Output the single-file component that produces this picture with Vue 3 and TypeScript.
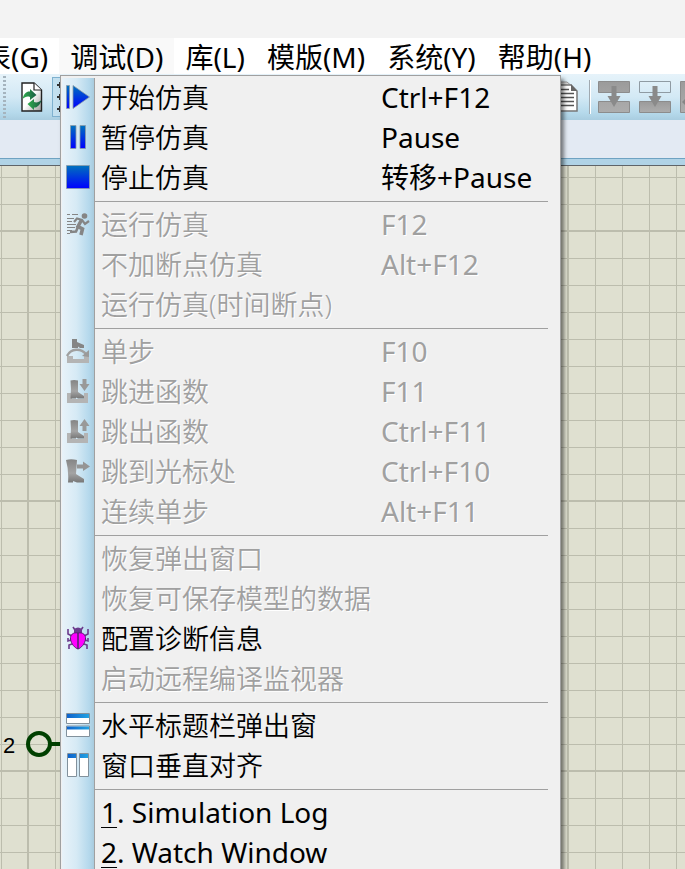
<script setup lang="ts">
type IconName =
  | 'play' | 'pause' | 'stop' | 'run' | 'over' | 'into' | 'out' | 'cursor'
  | 'bug' | 'horizontal' | 'vertical'

interface MenuItem {
  label: string
  index?: string
  shortcut?: string
  icon?: IconName
  disabled?: boolean
}

const menus = [
  { label: '图表(G)' },
  { label: '调试(D)', open: true },
  { label: '库(L)' },
  { label: '模版(M)' },
  { label: '系统(Y)' },
  { label: '帮助(H)' },
]

const groups: MenuItem[][] = [
  [
    { label: '开始仿真', shortcut: 'Ctrl+F12', icon: 'play' },
    { label: '暂停仿真', shortcut: 'Pause', icon: 'pause' },
    { label: '停止仿真', shortcut: '转移+Pause', icon: 'stop' },
  ],
  [
    { label: '运行仿真', shortcut: 'F12', icon: 'run', disabled: true },
    { label: '不加断点仿真', shortcut: 'Alt+F12', disabled: true },
    { label: '运行仿真(时间断点)', disabled: true },
  ],
  [
    { label: '单步', shortcut: 'F10', icon: 'over', disabled: true },
    { label: '跳进函数', shortcut: 'F11', icon: 'into', disabled: true },
    { label: '跳出函数', shortcut: 'Ctrl+F11', icon: 'out', disabled: true },
    { label: '跳到光标处', shortcut: 'Ctrl+F10', icon: 'cursor', disabled: true },
    { label: '连续单步', shortcut: 'Alt+F11', disabled: true },
  ],
  [
    { label: '恢复弹出窗口', disabled: true },
    { label: '恢复可保存模型的数据', disabled: true },
    { label: '配置诊断信息', icon: 'bug' },
    { label: '启动远程编译监视器', disabled: true },
  ],
  [
    { label: '水平标题栏弹出窗', icon: 'horizontal' },
    { label: '窗口垂直对齐', icon: 'vertical' },
  ],
  [
    { index: '1', label: 'Simulation Log' },
    { index: '2', label: 'Watch Window' },
  ],
]
</script>

<template>
  <div class="app">
    <svg class="defs" width="0" height="0" aria-hidden="true">
      <defs>
        <linearGradient id="blue" x1="0" y1="0" x2="0" y2="1">
          <stop offset="0" stop-color="#0072bc" />
          <stop offset="1" stop-color="#0000ff" />
        </linearGradient>
        <linearGradient id="bar" x1="0" y1="0" x2="1" y2="0">
          <stop offset="0" stop-color="#0d62cc" />
          <stop offset="1" stop-color="#22a2e2" />
        </linearGradient>
        <linearGradient id="grey" x1="0" y1="0" x2="0" y2="1">
          <stop offset="0" stop-color="#9b9b9b" />
          <stop offset="1" stop-color="#adadad" />
        </linearGradient>
        <linearGradient id="boot" x1="0" y1="0" x2="0" y2="1">
          <stop offset="0" stop-color="#858585" />
          <stop offset="0.6" stop-color="#a4a4a4" />
          <stop offset="1" stop-color="#777" />
        </linearGradient>
        <linearGradient id="paper" x1="0" y1="0" x2="1" y2="1">
          <stop offset="0.5" stop-color="#fff" />
          <stop offset="1" stop-color="#999" />
        </linearGradient>
        <linearGradient id="leaf" x1="0" y1="0" x2="1" y2="0">
          <stop offset="0" stop-color="#2fae4e" />
          <stop offset="1" stop-color="#1a5c44" />
        </linearGradient>
      </defs>
    </svg>

    <div class="titlebar"></div>

    <nav class="menubar">
      <button v-for="m in menus" :key="m.label" type="button" class="menu-title" :class="{ open: m.open }">{{ m.label }}</button>
    </nav>

    <div class="toolbar">
      <div class="tools">
        <span class="grip"></span>
        <button type="button" class="tool refresh" aria-label="刷新">
          <svg width="22" height="30" viewBox="0 0 22 30">
            <path d="M1 1H13L20.500 8V29H1Z" fill="url(#paper)" stroke="#222" stroke-width="1.4" />
            <path d="M13 1V8H20.500" fill="#fff" stroke="#222" stroke-width="1.2" />
            <path d="M1.500 17C3 11 6 9 9 9.500V7L15.500 13L9 18V15C6 14 4 15 1.500 17Z" fill="url(#leaf)" />
            <path d="M20.500 18C19 24 15 26 13 25.500V28L6.500 22L13 17V20C16 21 18 20 20.500 18Z" fill="url(#leaf)" />
          </svg>
        </button>
        <button type="button" class="tool grid-toggle" aria-label="网格">
          <svg width="28" height="32" viewBox="0 0 28 32">
            <path d="M7 1v6M7 13v6M7 25v6M4 4h6M4 16h6M4 28h6" stroke="#333" stroke-width="2" />
          </svg>
        </button>
      </div>
      <div class="tools">
        <button type="button" class="tool" aria-label="复制">
          <svg width="32" height="32" viewBox="0 0 32 32">
            <path d="M4 1H21L27 6V29H4Z" fill="#d5d5d5" stroke="#999" />
            <path d="M8 4H25L31 10V30H8Z" fill="#fff" stroke="#777" stroke-width="1.5" />
            <path d="M25 3L31 10H25Z" fill="#666" />
            <path d="M10 8.500H23M10 12.500H28M10 16.500H28M10 20.500H28M10 24.500H28" stroke="#555" stroke-width="1.5" />
          </svg>
        </button>
        <span class="divider"></span>
        <button type="button" class="tool block" aria-label="块复制">
          <svg width="32" height="32" viewBox="0 0 32 32">
            <path d="M.5.5H31.5V11.5H.5ZM.5 20.5H31.5V31.5H.5Z" fill="url(#grey)" stroke="#8c8c8c" />
            <path d="M13.500 5H18.500V15H22.500L16 26L9.500 15H13.500Z" fill="#8a8a8a" />
          </svg>
        </button>
        <button type="button" class="tool block" aria-label="块移动">
          <svg width="32" height="32" viewBox="0 0 32 32">
            <path d="M.5.5H31.5V11.5H.5Z" fill="none" stroke="#8f9ba3" />
            <path d="M.5 20.5H31.5V31.5H.5Z" fill="url(#grey)" stroke="#8c8c8c" />
            <path d="M13.500 5H18.500V15H22.500L16 26L9.500 15H13.500Z" fill="#8a8a8a" />
          </svg>
        </button>
        <button type="button" class="tool block" aria-label="块旋转">
          <svg width="32" height="32" viewBox="0 0 32 32">
            <path d="M.5.5H31.5V31.5H.5Z" fill="url(#grey)" stroke="#8c8c8c" />
            <path d="M2 21L8 15V27Z" fill="#858585" />
          </svg>
        </button>
      </div>
    </div>
    <div class="band"></div>
    <div class="edge"></div>

    <main class="canvas">
      <span class="pin-label">2</span>
      <svg class="pin" width="40" height="30" viewBox="0 0 40 30">
        <circle cx="13" cy="15" r="11" fill="none" stroke="#004000" stroke-width="4" />
        <path d="M24 15H40" stroke="#004000" stroke-width="4" />
      </svg>
    </main>

    <div class="menu" role="menu">
      <div v-for="(group, g) in groups" :key="g" class="group" role="group">
        <button v-for="item in group" :key="item.label" type="button" role="menuitem" class="item" :disabled="item.disabled">
          <span class="icon">
            <svg v-if="item.icon" width="24" height="24" viewBox="0 0 24 24">
              <g v-if="item.icon === 'play'" fill="url(#blue)" stroke="#8a9aa8" stroke-width=".8">
                <path d="M.5.5H3.500V23.500H.5ZM7 .5L23.500 12L7 23.500Z" />
              </g>
              <path v-else-if="item.icon === 'pause'" d="M4.500.5H10V23.500H4.500ZM14 .5H19.500V23.500H14Z" fill="url(#blue)" stroke="#8a9aa8" stroke-width=".8" />
              <path v-else-if="item.icon === 'stop'" d="M.5.5H23.500V23.500H.5Z" fill="url(#blue)" stroke="#8a9aa8" stroke-width=".8" />
              <g v-else-if="item.icon === 'run'" fill="none" stroke="#858585">
                <path d="M1 2.500H4M6 2.500H12M1 6.500H8M1 9.500H6M1 12.500H10M1 15.500H9M1 18.500H6M1 21.500H4" stroke-width="1.200" />
                <circle cx="18.500" cy="4" r="2.800" fill="#858585" stroke="none" />
                <path d="M8 10L11 6.500L16 8L19 12L23 9" stroke-width="2.200" />
                <path d="M15.500 8L12 14.500L16.500 17L15 23" stroke-width="3.600" />
                <path d="M12 15L10 19.500L4 20" stroke-width="2.600" />
              </g>
              <g v-else-if="item.icon === 'over'">
                <path d="M6 0H11V3L18 6V9H14L12 7.500V9H6Z" fill="#858585" />
                <path d="M1 17H7V20H18V17H23V24H1Z" fill="#b4b4b4" />
                <path d="M1 17C5 9 15 9 20 15" fill="none" stroke="#a0a0a0" stroke-width="2.400" />
                <path d="M23 11V18L16 17Z" fill="#9a9a9a" />
              </g>
              <g v-else-if="item.icon === 'into' || item.icon === 'out'">
                <path d="M1 14H6V20H18V14H22V24H1Z" fill="#b4b4b4" />
                <path d="M4.500 1.500Q8 .5 12 1.500V13L18 17V19.500H12L10 18.500V19.500H4.500Q5.500 10 4.500 1.500Z" fill="url(#boot)" />
                <path v-if="item.icon === 'into'" d="M16.500 0H20.500V5H23.500L18.500 12L13.500 5H16.500Z" fill="#999" />
                <path v-else d="M16.500 12H20.500V7H23.500L18.500 0L13.500 7H16.500Z" fill="#999" />
              </g>
              <g v-else-if="item.icon === 'cursor'">
                <path d="M0 1Q5 -.5 11 1L10 15L18 20V23.500H11L7 22V23.500H2Q3 12 0 1Z" fill="url(#boot)" />
                <path d="M11 5.500H17V2.500L24 7.500L17 12V9.500H11Z" fill="#959595" />
              </g>
              <g v-else-if="item.icon === 'bug'">
                <path d="M9 4L7 1M15 4L17 1M6 10L2 8V3M18 10L22 8V3M5 14L2 15V12M19 14L22 15V12M6 18L3 19V23M18 18L21 19V23" fill="none" stroke="#6b3a8c" stroke-width="1.600" />
                <path d="M8 8V3Q12 0 16 3V8Z" fill="#6b3a8c" />
                <path d="M12 7C17 6 20 9 19.500 13C19 18 15 22 12 23C9 22 5 18 4.500 13C4 9 7 6 12 7Z" fill="#f0f" stroke="#52206e" />
                <path d="M12 7V23" stroke="#52206e" stroke-width="1.500" />
              </g>
              <g v-else-if="item.icon === 'horizontal'">
                <path d="M.5.5H23.500V10.500H.5ZM.5 13H23.500V23.500H.5Z" fill="#fff" stroke="#82919c" />
                <path d="M1 1H23V5H1ZM1 13.500H23V16.500H1Z" fill="url(#bar)" />
              </g>
              <g v-else-if="item.icon === 'vertical'">
                <path d="M1.500.5H10.500V23.500H1.500ZM13.500.5H22.500V23.500H13.500Z" fill="#fff" stroke="#82919c" />
                <path d="M2 1H10V5H2ZM14 1H22V5H14Z" fill="url(#bar)" />
              </g>
            </svg>
          </span>
          <span class="label" :class="{ latin: item.index }"><template v-if="item.index"><u>{{ item.index }}</u>. </template>{{ item.label }}</span>
          <span class="shortcut">{{ item.shortcut }}</span>
        </button>
      </div>
    </div>
  </div>
</template>

<style>
body {
  margin: 0;
}
</style>

<style scoped>
.app {
  position: relative;
  display: flex;
  flex-direction: column;
  height: 100vh;
  overflow: hidden;
  font-family: "Noto Sans", "Noto Sans CJK SC", sans-serif;
  font-size: 27px;
  color: #000;
}
.defs {
  position: absolute;
}
button {
  font: inherit;
  color: inherit;
  border: 0;
  background: none;
  padding: 0;
  margin: 0;
}
.titlebar {
  flex: none;
  height: 38px;
  background: #f3f3f3;
}
.menubar {
  flex: none;
  display: flex;
  height: 36px;
  margin-left: -56px;
  background: #fff;
  font-size: 28px;
  white-space: nowrap;
}
.menu-title {
  flex: none;
  padding: 3px 11px 0;
  line-height: 33px;
}
.menu-title.open {
  background: #f9f9f9;
}
.toolbar {
  flex: none;
  display: flex;
  justify-content: space-between;
  height: 46px;
  overflow: hidden;
  background: linear-gradient(#e6f3fa, #d3e9f5 50%, #b5d9eb 85%, #a9cde0);
}
.tools {
  display: flex;
  align-items: center;
}
.tools:last-child {
  margin-right: -27px;
}
.tool {
  flex: none;
  display: flex;
}
.grip {
  width: 3px;
  height: 42px;
  margin: 0 15px 0 3px;
  background: repeating-linear-gradient(#a5b4be 0 2px, transparent 2px 4px);
}
.refresh {
  margin-right: 9px;
}
.grid-toggle {
  padding: 3px 0;
  border: 1px solid #7fb1cf;
  background: #c3e0ef;
}
.divider {
  width: 1px;
  height: 34px;
  margin: 0 7px 0 11px;
  background: #a0a9b0;
  border-right: 1px solid #fff;
}
.block {
  margin-right: 9px;
}
.block:last-child {
  margin-right: 0;
}
.band {
  flex: none;
  height: 38px;
  background: #e3eaf3;
}
.edge {
  flex: none;
  height: 6px;
  border-top: 1px solid #6fa3c2;
  border-bottom: 1px solid #5f6468;
  background: #b0d3e6;
}
.canvas {
  position: relative;
  flex: 1;
  background-color: #dfe0d0;
  background-image:
    linear-gradient(90deg, #bcbdad 2px, transparent 2px),
    linear-gradient(#bcbdad 2px, transparent 2px),
    linear-gradient(90deg, #bcbdad 1px, transparent 1px),
    linear-gradient(#bcbdad 1px, transparent 1px);
  background-size: 270px 270px, 270px 270px, 27px 27px, 27px 27px;
  background-position: 27px 0, 0 64px, 1px 0, 0 11px;
}
.pin-label {
  position: absolute;
  left: 3px;
  top: 568px;
  font: 22px/24px "Liberation Sans", sans-serif;
}
.pin {
  position: absolute;
  left: 26px;
  top: 563px;
}
.menu {
  position: absolute;
  top: 75px;
  bottom: -8px;
  left: 60px;
  width: 499px;
  padding-top: 2px;
  border: 1px solid #a0a0a0;
  background:
    linear-gradient(#a0a0a0, #a0a0a0) 33px 2px / 1px 100% no-repeat,
    linear-gradient(90deg, #e8f2f9, #d6eaf5 45%, #b4d8ec 85%, #a9cbdd) 1px 2px / 32px 100% no-repeat,
    #f0f0f0;
  box-shadow: 3px 4px 4px rgba(0, 0, 0, 0.5);
}
.group + .group::before {
  content: "";
  display: block;
  height: 1px;
  margin: 3px 12px 3px 34px;
  background: #a0a0a0;
}
.item {
  display: grid;
  grid-template-columns: 40px 280px 1fr;
  align-items: start;
  width: 100%;
  height: 40px;
  text-align: left;
  white-space: nowrap;
}
.item:disabled {
  color: #a0a0a0;
  text-shadow: 1px 1px 0 #fff;
}
.icon {
  display: flex;
  padding: 7px 0 0 5px;
}
.label {
  font-weight: 350;
  line-height: 40px;
}
.shortcut,
.latin {
  font-size: 28px;
  font-weight: 400;
  line-height: 38px;
}
u {
  text-decoration-thickness: 1px;
  text-underline-offset: 4px;
}
</style>
